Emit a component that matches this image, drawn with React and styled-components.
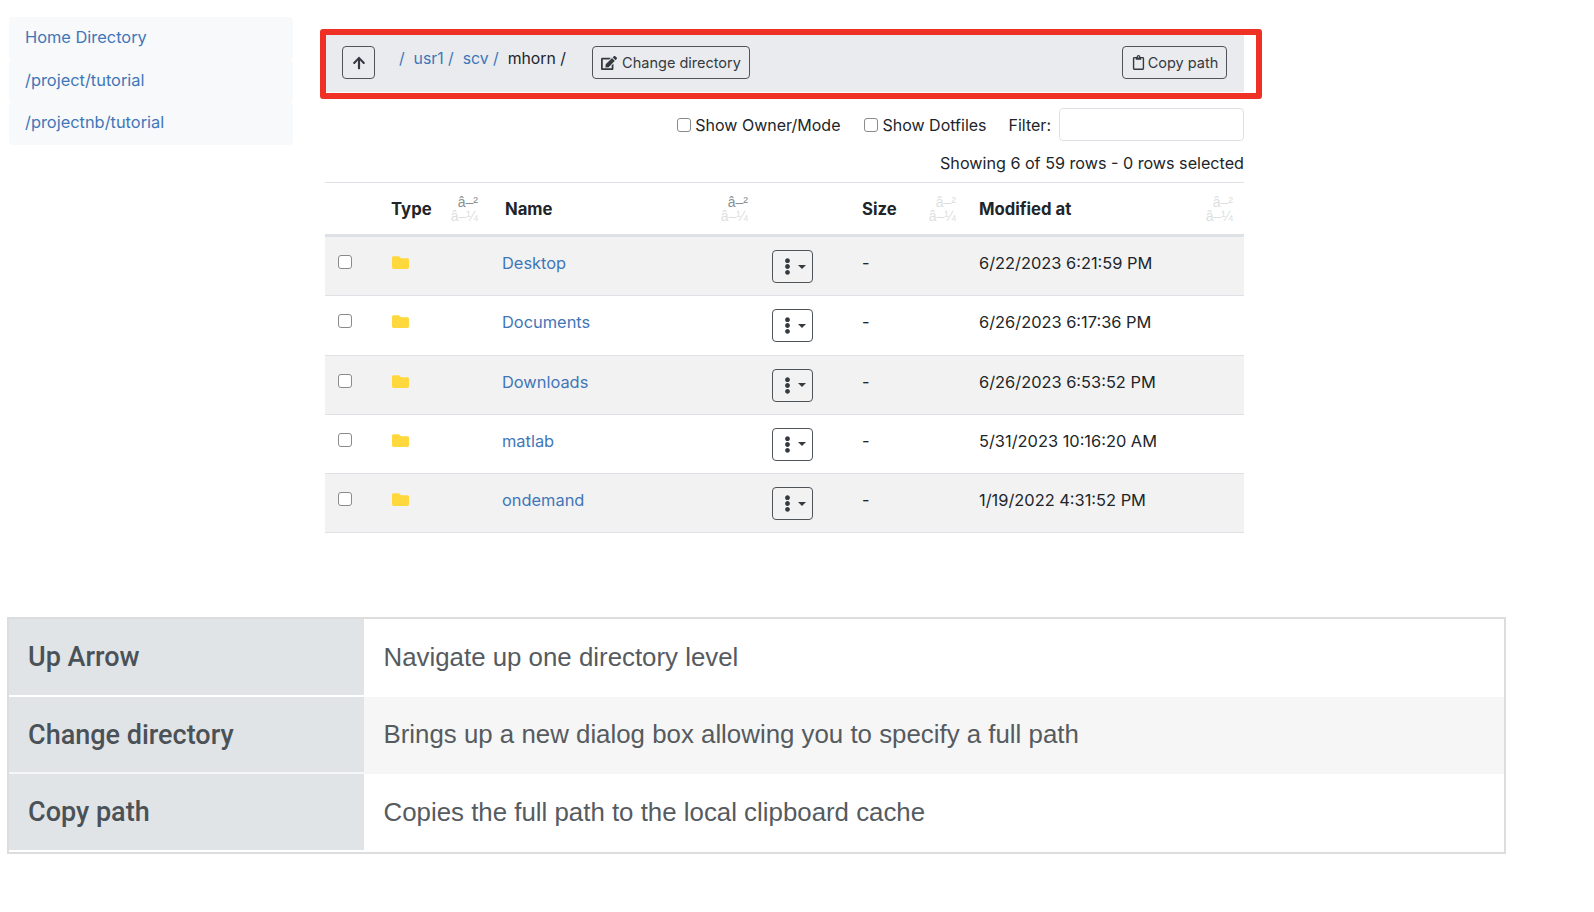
import React from 'react'
import styled, { createGlobalStyle } from 'styled-components'
import { FaArrowUp, FaEdit, FaRegClipboard, FaFolder, FaEllipsisV } from 'react-icons/fa'

const GlobalStyle = createGlobalStyle`
    html, body {
        margin: 0;
        background: #fff;
    }
    body {
        font-family: Inter, "Liberation Sans", sans-serif;
        font-size: 16px;
        color: #212529;
    }
`

const Page = styled.div`
    width: 1594px;
    height: 912px;
    padding-top: 17px;
    box-sizing: border-box;
    overflow: hidden;
`

const Top = styled.div`
    display: flex;
    padding-left: 9px;
    height: 600px;
`

const SideNav = styled.nav`
    width: 284px;
    display: flex;
    flex-direction: column;
    margin-right: 32px;
`

const SideLink = styled.a`
    height: 42.5px;
    line-height: 41.5px;
    padding-left: 16px;
    background: #f8f9fa;
    color: #3f76b8;
    border-radius: 4px;
    font-size: 16.4px;
`

const Main = styled.main`
    width: 919px;
    padding-top: 18px;
`

const Bar = styled.div`
    position: relative;
    height: 57px;
    background: #e9ebef;
    display: flex;
    align-items: flex-start;
    padding: 11px 17px 0;
    box-sizing: border-box;
`

const RedFrame = styled.div`
    position: absolute;
    left: -5px;
    top: -6px;
    width: 942px;
    height: 70px;
    border: 6px solid #ee3124;
    border-radius: 3px;
    box-sizing: border-box;
    pointer-events: none;
`

const OutlineButton = styled.button`
    height: 33px;
    width: ${p => p.$w}px;
    display: flex;
    align-items: center;
    justify-content: center;
    gap: ${p => p.$gap || 0}px;
    padding: 0;
    background: transparent;
    border: 1px solid #4f5459;
    border-radius: 4px;
    color: #343a40;
    font-family: inherit;
    font-size: 14.5px;
    svg {
        flex: none;
    }
`

const Crumbs = styled.div`
    display: flex;
    margin-left: 24px;
    line-height: 26px;
    width: 193px;
    white-space: pre;
    font-size: 15.8px;
`

const CrumbLink = styled.a`
    color: #3f76b8;
`

const Spacer = styled.div`
    flex: 1;
`

const Controls = styled.div`
    display: flex;
    justify-content: flex-end;
    align-items: center;
    margin-top: 16px;
    height: 33px;
`

const CheckLabel = styled.label`
    display: flex;
    align-items: center;
    margin-right: ${p => p.$mr}px;
    gap: 4px;
    line-height: 24px;
`

const Check = styled.input.attrs({ type: 'checkbox' })`
    appearance: none;
    width: 14px;
    height: 14px;
    margin: 0;
    flex: none;
    border: 1px solid #8a8a8a;
    border-radius: 3px;
    background: #fff;
    box-sizing: border-box;
`

const FilterInput = styled.input`
    width: 185px;
    height: 33px;
    margin-left: 8px;
    border: 1px solid #dee2e6;
    border-radius: 4px;
    box-sizing: border-box;
    background: #fff;
`

const Count = styled.div`
    text-align: right;
    margin-top: 10px;
    line-height: 24px;
    height: 31px;
    font-size: 16.15px;
`

const Row = styled.div`
    display: grid;
    grid-template-columns: 66px 110px 361px 117px 265px;
`

const HeadRow = styled(Row)`
    height: 51px;
    border-top: 1px solid #dee2e6;
    border-bottom: 3px solid #dee2e6;
    box-sizing: content-box;
`

const HeadCell = styled.div`
    display: flex;
    justify-content: space-between;
    align-items: center;
    font-weight: 700;
    font-size: 16.7px;
    padding-right: ${p => p.$pr}px;
`

const SortMark = styled.span`
    display: flex;
    flex-direction: column;
    align-items: flex-end;
    font-family: "Liberation Sans", sans-serif;
    font-weight: 400;
    font-size: 14px;
    line-height: 14px;
    color: ${p => (p.$active ? '#8a8f94' : '#dcdfe2')};
    span:last-child {
        color: #dcdfe2;
    }
`

const BodyRow = styled(Row)`
    height: 58.3px;
    border-bottom: 1px solid #dee2e6;
    background: ${p => (p.$odd ? '#f2f2f2' : '#fff')};
    font-size: 16.4px;
`

const Cell = styled.div`
    padding-top: 14px;
    line-height: 24px;
    display: flex;
    align-items: flex-start;
`

const CheckCell = styled(Cell)`
    padding: 18px 0 0 13px;
`

const FolderCell = styled(Cell)`
    padding: 17px 0 0 1px;
    color: #ffd83d;
`

const NameCell = styled(Cell)`
    position: relative;
    padding-left: 1px;
    color: #3f76b8;
`

const MenuButton = styled.button`
    position: absolute;
    left: 271px;
    top: 13px;
    width: 41px;
    height: 33px;
    padding: 0;
    background: transparent;
    border: 1px solid #4f5459;
    border-radius: 4px;
    display: flex;
    align-items: center;
    justify-content: center;
    gap: 2px;
    color: #343a40;
`

const Caret = styled.i`
    width: 0;
    height: 0;
    border-top: 4px solid #343a40;
    border-left: 4px solid transparent;
    border-right: 4px solid transparent;
`

const Legend = styled.div`
    margin-left: 7px;
    width: 1499px;
    height: 237px;
    border: 2px solid #dddddd;
    box-sizing: border-box;
    display: flex;
    flex-direction: column;
`

const LegendRow = styled.div`
    display: grid;
    grid-template-columns: 355px 1fr;
    height: ${p => p.$h}px;
    background: ${p => (p.$alt ? '#f6f6f6' : '#fff')};
`

const LegendKey = styled.div`
    background: #e1e4e7;
    margin-bottom: 2px;
    padding-left: 19px;
    display: flex;
    align-items: center;
    font-family: Roboto, sans-serif;
    font-weight: 500;
    font-size: 27px;
    color: #4a5257;
`

const LegendValue = styled.div`
    padding-left: 19.5px;
    padding-bottom: 2px;
    display: flex;
    align-items: center;
    font-family: "Liberation Sans", sans-serif;
    font-size: 25.85px;
    color: #555b5f;
`

const files = [
    { name: 'Desktop', date: '6/22/2023 6:21:59 PM' },
    { name: 'Documents', date: '6/26/2023 6:17:36 PM' },
    { name: 'Downloads', date: '6/26/2023 6:53:52 PM' },
    { name: 'matlab', date: '5/31/2023 10:16:20 AM' },
    { name: 'ondemand', date: '1/19/2022 4:31:52 PM' },
]

const legend = [
    { key: 'Up Arrow', value: 'Navigate up one directory level', h: 78 },
    { key: 'Change directory', value: 'Brings up a new dialog box allowing you to specify a full path', h: 77 },
    { key: 'Copy path', value: 'Copies the full path to the local clipboard cache', h: 78 },
]

const Sort = ({ active }) => (
    <SortMark $active={active}>
        <span>â–²</span>
        <span>â–¼</span>
    </SortMark>
)

const App = () => (
    <Page>
        <GlobalStyle />
        <Top>
            <SideNav>
                <SideLink>Home Directory</SideLink>
                <SideLink>/project/tutorial</SideLink>
                <SideLink>/projectnb/tutorial</SideLink>
            </SideNav>

            <Main>
                <Bar>
                    <OutlineButton $w={33}>
                        <FaArrowUp size={14} />
                    </OutlineButton>
                    <Crumbs>
                        <CrumbLink>/ </CrumbLink>
                        <CrumbLink> usr1 / </CrumbLink>
                        <CrumbLink> scv / </CrumbLink>
                        <span> mhorn /</span>
                    </Crumbs>
                    <OutlineButton $w={158} $gap={5}>
                        <FaEdit size={16} />
                        Change directory
                    </OutlineButton>
                    <Spacer />
                    <OutlineButton $w={105} $gap={2}>
                        <FaRegClipboard size={15} />
                        Copy path
                    </OutlineButton>
                    <RedFrame />
                </Bar>

                <Controls>
                    <CheckLabel $mr={24}><Check />Show Owner/Mode</CheckLabel>
                    <CheckLabel $mr={22}><Check />Show Dotfiles</CheckLabel>
                    <span>Filter:</span>
                    <FilterInput />
                </Controls>
                <Count>Showing 6 of 59 rows - 0 rows selected</Count>

                <HeadRow>
                    <div />
                    <HeadCell $pr={23}>Type<Sort active /></HeadCell>
                    <HeadCell $pr={114}>&nbsp;Name<Sort active /></HeadCell>
                    <HeadCell $pr={23}>Size<Sort /></HeadCell>
                    <HeadCell $pr={11}>Modified at<Sort /></HeadCell>
                </HeadRow>
                {files.map((f, i) => (
                    <BodyRow key={f.name} $odd={i % 2 === 0}>
                        <CheckCell><Check /></CheckCell>
                        <FolderCell><FaFolder size={17} /></FolderCell>
                        <NameCell>
                            {f.name}
                            <MenuButton>
                                <FaEllipsisV size={17} />
                                <Caret />
                            </MenuButton>
                        </NameCell>
                        <Cell>-</Cell>
                        <Cell>{f.date}</Cell>
                    </BodyRow>
                ))}
            </Main>
        </Top>

        <Legend>
            {legend.map((l, i) => (
                <LegendRow key={l.key} $h={l.h} $alt={i === 1}>
                    <LegendKey>{l.key}</LegendKey>
                    <LegendValue>{l.value}</LegendValue>
                </LegendRow>
            ))}
        </Legend>
    </Page>
)

export default App
